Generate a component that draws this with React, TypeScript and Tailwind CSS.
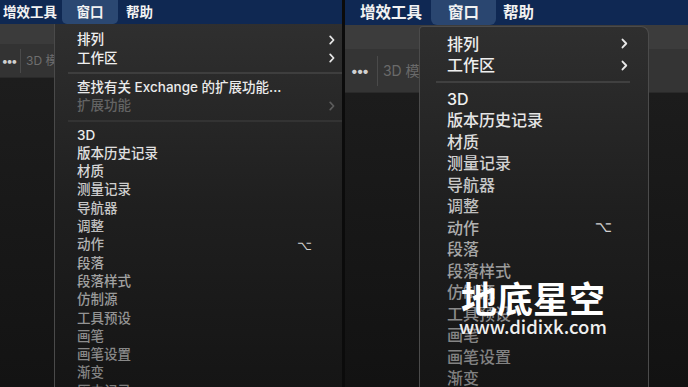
import React from 'react';

type Item = { label: string; color: string; sub?: boolean; key?: boolean };

const leftItems: Item[] = [
  { label: '3D', color: 'text-[#ececec]' },
  { label: '版本历史记录', color: 'text-[#e0e0e0]' },
  { label: '材质', color: 'text-[#d6d6d6]' },
  { label: '测量记录', color: 'text-[#cecece]' },
  { label: '导航器', color: 'text-[#c6c6c6]' },
  { label: '调整', color: 'text-[#bdbdbd]' },
  { label: '动作', color: 'text-[#b4b4b4]', key: true },
  { label: '段落', color: 'text-[#aaaaaa]' },
  { label: '段落样式', color: 'text-[#a2a2a2]' },
  { label: '仿制源', color: 'text-[#9a9a9a]' },
  { label: '工具预设', color: 'text-[#939393]' },
  { label: '画笔', color: 'text-[#8c8c8c]' },
  { label: '画笔设置', color: 'text-[#888888]' },
  { label: '渐变', color: 'text-[#848484]' },
  { label: '历史记录', color: 'text-[#7e7e7e]' },
];

const rightItems: Item[] = [
  { label: '3D', color: 'text-[#f0f0f0]' },
  { label: '版本历史记录', color: 'text-[#e6e6e6]' },
  { label: '材质', color: 'text-[#dcdcdc]' },
  { label: '测量记录', color: 'text-[#d2d2d2]' },
  { label: '导航器', color: 'text-[#c8c8c8]' },
  { label: '调整', color: 'text-[#bebebe]' },
  { label: '动作', color: 'text-[#b0b0b0]', key: true },
  { label: '段落', color: 'text-[#a6a6a6]' },
  { label: '段落样式', color: 'text-[#9c9c9c]' },
  { label: '仿制源', color: 'text-[#929292]' },
  { label: '工具预设', color: 'text-[#8a8a8a]' },
  { label: '画笔', color: 'text-[#858585]' },
  { label: '画笔设置', color: 'text-[#828282]' },
  { label: '渐变', color: 'text-[#808080]' },
  { label: '历史记录', color: 'text-[#7a7a7a]' },
];

function Chevron({ big, dim }: { big?: boolean; dim?: boolean }) {
  const w = big ? 7 : 6;
  const h = big ? 11 : 10;
  return (
    <svg width={w} height={h} viewBox="0 0 6 10" className={dim ? 'text-[#5c5c5c]' : 'text-[#e8e8e8]'}>
      <path d="M1.2 1.4 L4.6 5 L1.2 8.6" fill="none" stroke="currentColor" strokeWidth="1.7" strokeLinecap="round" strokeLinejoin="round" />
    </svg>
  );
}

const font = "font-['Inter','Noto_Sans_CJK_SC',sans-serif]";

function LeftPanel() {
  const row = 'h-[18.3px] flex items-center pl-[22px] pr-[6px] text-[13.5px] font-medium leading-none';
  return (
    <div className={`relative w-[342px] h-full overflow-hidden flex flex-col bg-[#181818] ${font}`}>
      {/* menu bar */}
      <div className="h-[24px] flex items-stretch bg-[#0f2852] text-[13.5px] font-semibold text-[#f2f2f2]">
        <div className="w-[62px] pl-[3px] flex items-center">增效工具</div>
        <div className="w-[56px] flex items-center justify-center bg-[#2b4872] rounded-b-[5px]">窗口</div>
        <div className="pl-[8px] flex items-center">帮助</div>
      </div>
      <div className="h-[20px] bg-[#3b3b3b]" />
      <div className="h-[34px] bg-[#333333] flex items-center border-b border-[#2a2a2a]">
        <span className="pl-[2px] text-[#d0d0d0] text-[12px] font-bold tracking-[-1px]">•••</span>
        <div className="ml-[4px] w-px h-[24px] bg-[#4a4a4a]" />
        <span className="ml-[5px] text-[12px] text-[#6e6e6e]">3D 模</span>
      </div>
      <div className="flex-1 bg-linear-to-b from-[#1d1d1d] to-[#131313]" />

      {/* dropdown */}
      <div className="absolute left-[54px] top-[24px] w-[292px] bottom-0 pt-[7px] border-l border-[#4a4a4a] bg-linear-to-b from-[#2f2f2f] via-[#1f1f1f] to-[#151515]">
        <div className={`${row} justify-between text-[#efefef]`}>
          <span>排列</span>
          <span className="mr-[5px]"><Chevron /></span>
        </div>
        <div className={`${row} justify-between text-[#efefef]`}>
          <span>工作区</span>
          <span className="mr-[5px]"><Chevron /></span>
        </div>
        <div className="h-[11px] flex items-center pl-[13px] pr-[4px]">
          <div className="h-[2px] w-full bg-[#3e3e3e]" />
        </div>
        <div className={`${row} text-[#ebebeb]`}>查找有关 Exchange 的扩展功能...</div>
        <div className={`${row} justify-between text-[#636363]`}>
          <span>扩展功能</span>
          <span className="mr-[5px]"><Chevron dim /></span>
        </div>
        <div className="h-[11px] flex items-center pl-[13px] pr-[4px]">
          <div className="h-[2px] w-full bg-[#333333]" />
        </div>
        {leftItems.map(it => (
          <div key={it.label} className={`${row} justify-between ${it.color}`}>
            <span>{it.label}</span>
            {it.key && <span className="mr-[28px] text-[13px] font-['DejaVu_Sans',sans-serif] text-[#d0d0d0]">⌥</span>}
          </div>
        ))}
      </div>
    </div>
  );
}

function RightPanel() {
  const row = 'h-[21.5px] flex items-center pl-[27px] pr-[6px] text-[16px] font-medium leading-none';
  return (
    <div className={`relative flex-1 h-full overflow-hidden flex flex-col bg-[#181818] ${font}`}>
      {/* menu bar */}
      <div className="h-[25px] flex items-stretch bg-[#0f2853] text-[15.5px] font-semibold text-[#f2f2f2]">
        <div className="w-[86px] pl-[15px] flex items-center">增效工具</div>
        <div className="w-[65px] flex items-center justify-center bg-[#2a4670] rounded-b-[6px]">窗口</div>
        <div className="pl-[7px] flex items-center">帮助</div>
      </div>
      <div className="h-[24px] bg-[#3c3c3c]" />
      <div className="h-[44px] bg-[#343434] flex items-center border-b border-[#2a2a2a]">
        <span className="pl-[6px] text-[#d0d0d0] text-[14px] font-bold tracking-[-1px]">•••</span>
        <div className="ml-[9px] w-px h-[30px] bg-[#4a4a4a]" />
        <span className="ml-[5px] text-[14px] text-[#6a6a6a]">3D 模</span>
      </div>
      <div className="flex-1 bg-linear-to-b from-[#1c1c1c] to-[#121212]" />

      {/* dropdown */}
      <div className="absolute left-[74px] top-[26px] w-[230px] bottom-0 pt-[6px] border-l border-r border-t border-[#4b4b4b] rounded-tr-[8px] rounded-tl-[4px] bg-linear-to-b from-[#2f2f2f] via-[#1f1f1f] to-[#151515]">
        <div className={`${row} justify-between text-[#efefef]`}>
          <span>排列</span>
          <span className="mr-[14px]"><Chevron big /></span>
        </div>
        <div className={`${row} justify-between text-[#efefef]`}>
          <span>工作区</span>
          <span className="mr-[14px]"><Chevron big /></span>
        </div>
        <div className="h-[12px] flex items-center pl-[16px] pr-[18px]">
          <div className="h-[2px] w-full bg-[#404040]" />
        </div>
        {rightItems.map(it => (
          <div key={it.label} className={`${row} justify-between ${it.color}`}>
            <span>{it.label}</span>
            {it.key && <span className="mr-[30px] text-[15px] font-['DejaVu_Sans',sans-serif] text-[#d0d0d0]">⌥</span>}
          </div>
        ))}
      </div>

      {/* watermark */}
      <div className="absolute left-[115px] top-[279px] w-[146px] flex flex-col items-center text-white font-['Noto_Sans_CJK_SC',sans-serif]">
        <div className="text-[36px] font-bold leading-none">地底星空</div>
        <div className="mt-[2px] text-[18.5px] font-medium leading-none text-[#f0f0f0]">www.didixk.com</div>
      </div>
    </div>
  );
}

export default function App() {
  return (
    <div className="w-[688px] h-[387px] flex bg-[#0a0a0a] overflow-hidden">
      <LeftPanel />
      <div className="w-[3px] h-full bg-[#0b0b0b]" />
      <RightPanel />
    </div>
  );
}
